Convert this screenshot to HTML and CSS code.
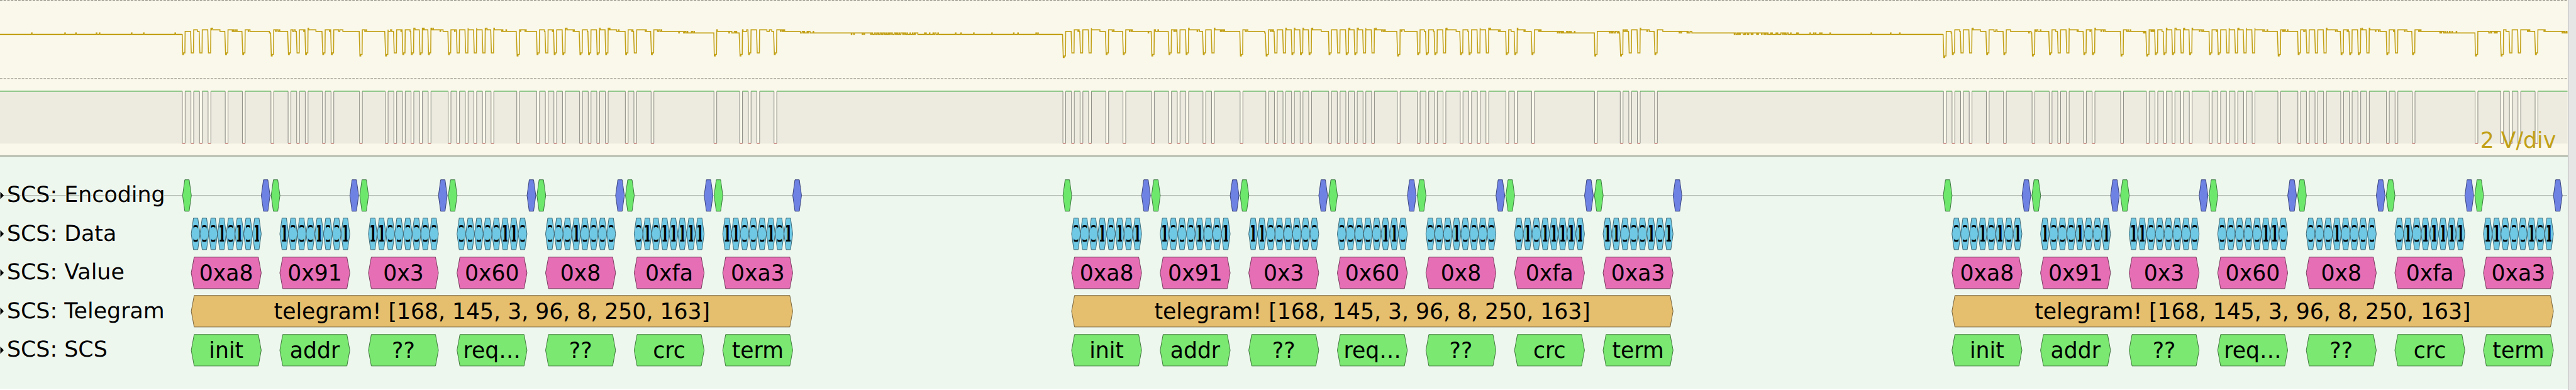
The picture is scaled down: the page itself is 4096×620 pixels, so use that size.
FILE: index.html
```html
<!DOCTYPE html>
<html lang="en">
<head>
<meta charset="utf-8">
<title>SCS bus capture</title>
<link rel="stylesheet" href="styles.css">
</head>
<body>
<div class="view">
  <main class="traces">
    <svg class="signals" id="signals" viewBox="0 0 4241 257" preserveAspectRatio="none"></svg>
    <section class="decoder" id="decoder">
      <div class="row"><svg class="track" viewBox="0 0 4241 64"></svg><span class="label">SCS: Encoding</span></div>
      <div class="row"><svg class="track" viewBox="0 0 4241 64"></svg><span class="label">SCS: Data</span></div>
      <div class="row"><svg class="track" viewBox="0 0 4241 64"></svg><span class="label">SCS: Value</span></div>
      <div class="row"><svg class="track" viewBox="0 0 4241 64"></svg><span class="label">SCS: Telegram</span></div>
      <div class="row"><svg class="track" viewBox="0 0 4241 64"></svg><span class="label">SCS: SCS</span></div>
    </section>
  </main>
  <aside class="gutter"></aside>
</div>
<script src="app.js"></script>
</body>
</html>
```
FILE: styles.css
```css
:root {
  --u: calc(4096px / 4255);
}

body {
  margin: 0;
  background: #fff;
  overflow: hidden;
  font-family: "DejaVu Sans", sans-serif;
}

.view {
  display: flex;
  width: 4096px;
  height: 620px;
}

.traces {
  display: flex;
  flex-direction: column;
  width: calc(4241 * var(--u));
  overflow: hidden;
}

.signals {
  display: block;
  flex: none;
  width: 100%;
  height: calc(257 * var(--u));
  background: #faf8ea;
}

.decoder {
  box-sizing: border-box;
  height: calc(385 * var(--u));
  padding-top: calc(31.5 * var(--u));
  border-top: 2px solid #a9b0a3;
  background: #edf7ee;
}

.row {
  display: grid;
  align-items: center;
  height: calc(64 * var(--u));
}

.track,
.label {
  grid-area: 1 / 1;
}

.track {
  display: block;
  width: 100%;
  height: 100%;
}

.label {
  padding-left: calc(11.3 * var(--u));
  font-size: calc(36.2 * var(--u));
  line-height: 1;
  color: #000;
  text-rendering: geometricPrecision;
  text-shadow: 1px 0 #f4faf4, -1px 0 #f4faf4, 0 1px #f4faf4, 0 -1px #f4faf4;
}

.gutter {
  flex: 1;
  border-left: 1px solid #b8b8b8;
  background: #e6e6e6;
}

.grid { stroke: #8e8e86; stroke-width: 1.1; stroke-dasharray: 4 2; }
.fill { fill: #edebe0; }
.high { stroke: #2fa02f; stroke-width: 1.2; fill: none; }
.low { stroke: #9c1c1c; stroke-width: 1.2; fill: none; }
.edge { stroke: #8d8d86; stroke-width: 1.1; fill: none; }
.analog { stroke: #c2a016; stroke-width: 1.6; fill: none; }
.idle { stroke: #c2a016; stroke-width: 2.3; fill: none; }
.scale { fill: #c2a016; font-size: 36px; text-anchor: end; }
.axis { stroke: #9fa79f; stroke-width: 1.1; }
.marker { fill: #000; }
.note { font-size: 36px; text-anchor: middle; fill: #000; }
.start { fill: #6ee86c; stroke: #37743a; }
.stop { fill: #6e82e4; stroke: #37417a; }
.bit { fill: #6fc8e4; stroke: #386472; }
.value { fill: #e66eb4; stroke: #73375a; }
.telegram { fill: #e5be6e; stroke: #735f37; }
.scs { fill: #7ae871; stroke: #3d7439; }
```
FILE: app.js
```js
const WIDTH = 4241;
const GROUPS = [301.2, 1755.7, 3210.2];
const BYTES = [0xa8, 0x91, 0x03, 0x60, 0x08, 0xfa, 0xa3];
const NAMES = ["init", "addr", "??", "req…", "??", "crc", "term"];
const BYTE_PITCH = 146.35;
const BIT_PITCH = 14.17;
const CELL = 14.45;
const PULSE = 4.6;

const bitsOf = b => Array.from({ length: 8 }, (_, i) => (b >> i) & 1);

let seed = 7;
const rand = () => (seed = (seed * 16807) % 2147483647) / 2147483647;

// Every zero bit, the start bit included, is one short low pulse.
const pulses = [];
GROUPS.forEach((g, gi) => BYTES.forEach((b, i) => {
  [0, ...bitsOf(b)].forEach((bit, k) => {
    if (!bit) pulses.push({ x: g + i * BYTE_PITCH + k * BIT_PITCH, gi, first: i + k === 0 });
  });
}));

function drawSignals() {
  let fill = "", high = "", low = "", edge = "", prev = 0;
  for (const p of pulses) {
    const end = p.x + PULSE;
    fill += `M${prev} 151H${p.x}V237H${prev}Z`;
    high += `M${prev} 150.6H${p.x}`;
    edge += `M${p.x} 151V236.5M${end} 151V236.5`;
    low += `M${p.x} 236.6H${end}`;
    prev = end;
  }
  fill += `M${prev} 151H${WIDTH}V237H${prev}Z`;
  high += `M${prev} 150.6H${WIDTH}`;

  // Bus voltage: a slow and a fast charge that build up on each pulse, quantised to ADC steps.
  let slow = 0, fast = 0, x = 0, n = 0, last = 57;
  let analog = "M0 57", idle = "M0 57";
  while (x < WIDTH) {
    const p = pulses[n];
    if (p && x + 1 > p.x) {
      const gap = n ? p.x - pulses[n - 1].x : 100;
      let bottom = gap > 40 ? 92.4 : gap > 20 ? 90 : rand() < 0.5 ? 90 : 87.4;
      if (p.first) bottom = p.gi ? 95 : 90;
      const rest = Math.max(87.4, bottom - 2.6);
      slow += (6.4 - slow) * 0.6;
      fast += 1.6;
      last = 57 - 2.6 * Math.round((slow + fast) / 2.6);
      analog += `L${p.x + 0.6} ${bottom}h1.4V${rest}H${p.x + PULSE - 0.4}L${p.x + PULSE} ${last}`;
      x = p.x + PULSE;
      idle += `M${x} ${last}`;
      n++;
      continue;
    }
    slow *= Math.exp(-1 / 118);
    fast *= Math.exp(-1 / 15);
    let level = Math.max(0, Math.round((slow + fast) / 2.6 + (rand() - 0.5) * 0.6));
    if (!level && rand() < 0.025) level = 1;
    const y = 57 - 2.6 * level;
    analog += `V${y}h1`;
    idle += y === 57 && last === 57 ? "h1" : `m1 ${y - last}`;
    last = y;
    x++;
  }
  document.getElementById("signals").innerHTML =
    `<line class="grid" x1="0" x2="${WIDTH}" y1=".6" y2=".6"/>
     <line class="grid" x1="0" x2="${WIDTH}" y1="129.6" y2="129.6"/>
     <path class="fill" d="${fill}"/><path class="edge" d="${edge}"/>
     <path class="high" d="${high}"/><path class="low" d="${low}"/>
     <path class="analog" d="${analog}"/><path class="idle" d="${idle}"/>
     <text class="scale" x="4222" y="244.5">2 V/div</text>`;
}

function box(cls, x, w, text) {
  const c = Math.min(w / 4, 4.8);
  const shape = `<path class="${cls}" d="M${x} 32L${x + c} 6H${x + w - c}L${x + w} 32L${x + w - c} 58H${x + c}Z"/>`;
  if (!text) return shape;
  if (w < 30) {
    return shape + `<svg x="${x + c}" y="6" width="${w - 2 * c}" height="52"><text class="note" x="${w / 2 - c}" y="38.5">${text}</text></svg>`;
  }
  return shape + `<text class="note" x="${x + w / 2}" y="44.5">${text}</text>`;
}

function drawDecoder() {
  const rows = ["", "", "", "", ""];
  rows[0] = `<line class="axis" x1="0" x2="${WIDTH}" y1="32" y2="32"/>`;
  for (const g of GROUPS) {
    BYTES.forEach((b, i) => {
      const x = g + i * BYTE_PITCH;
      const data = x + 14.3;
      rows[0] += box("start", x, CELL) + box("stop", x + 130, CELL);
      bitsOf(b).forEach((bit, k) => { rows[1] += box("bit", data + k * CELL, CELL, String(bit)); });
      rows[2] += box("value", data, 8 * CELL, "0x" + b.toString(16));
      rows[4] += box("scs", data, 8 * CELL, NAMES[i]);
    });
    rows[3] += box("telegram", g + 14.3, 6 * BYTE_PITCH + 8 * CELL, `telegram! [${BYTES.join(", ")}]`);
  }
  document.querySelectorAll(".track").forEach((svg, i) => {
    svg.innerHTML = rows[i] + `<path class="marker" d="M0 26L5.8 32L0 38Z"/>`;
  });
}

drawSignals();
drawDecoder();
```
